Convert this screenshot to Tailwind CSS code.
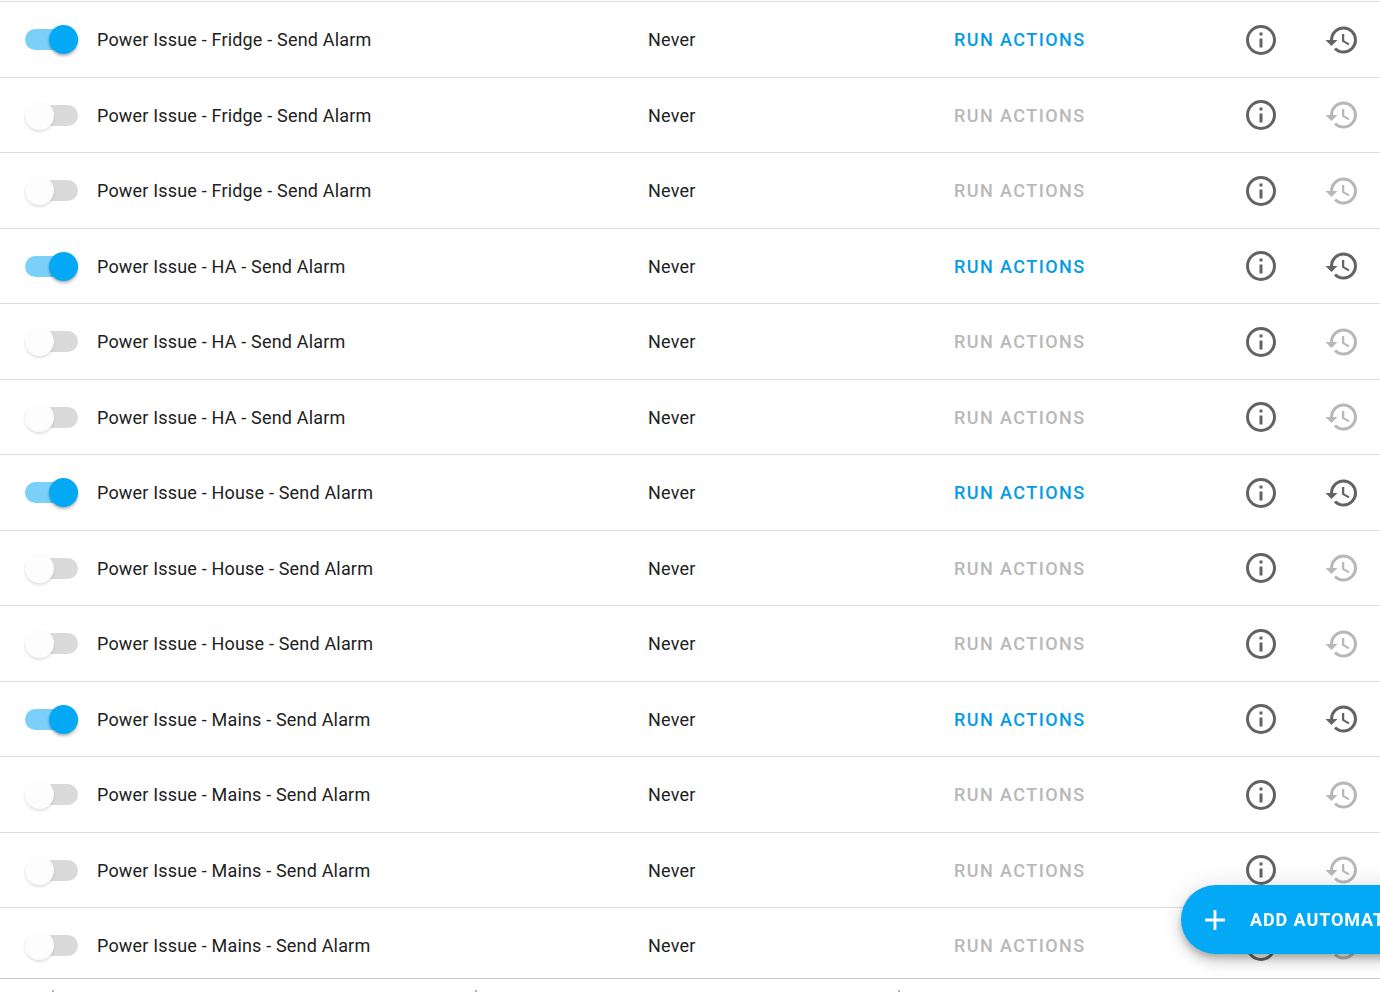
<!DOCTYPE html>
<html lang="en">
<head>
  <meta charset="UTF-8">
  <meta name="viewport" content="width=device-width, initial-scale=1.0">
  <title>Automations</title>
  <script src="https://cdn.jsdelivr.net/npm/@tailwindcss/browser@4"></script>
</head>
<body class="h-screen overflow-hidden flex flex-col bg-white text-[#212121] text-[18px] font-['Roboto',sans-serif]">

  <main class="flex-1 min-h-0 overflow-hidden pt-px">
    <table class="w-full table-fixed border-collapse border-t border-[#dcdcdc] text-left tracking-[0.01em]">
      <colgroup>
        <col class="w-[97px]">
        <col>
        <col class="w-[306px]">
        <col class="w-[265px]">
        <col class="w-[84px]">
        <col class="w-[77px]">
      </colgroup>
      <tbody id="automations"></tbody>
    </table>
  </main>

  <!-- Bottom tab bar -->
  <footer class="shrink-0 h-[14px] border-t border-[#c8c8c8] bg-white flex items-end gap-[421px] pl-[52px] overflow-hidden">
    <span class="w-[2px] h-[2px] shrink-0 bg-[#b0b0b0]"></span>
    <span class="w-[2px] h-[2px] shrink-0 bg-[#b0b0b0]"></span>
    <span class="w-[2px] h-[2px] shrink-0 bg-[#b0b0b0]"></span>
  </footer>

  <button type="button" class="fixed -right-[73px] bottom-[38px] w-[272px] h-[69px] pl-[17px] flex items-center gap-[18px] rounded-full bg-[#03a9f4] text-white font-bold tracking-[0.05em] whitespace-nowrap shadow-[0_4px_7px_-1px_rgba(0,0,0,0.22),0_8px_14px_rgba(0,0,0,0.14),0_1px_24px_rgba(0,0,0,0.12)]">
    <svg class="size-[34px] shrink-0" viewBox="0 0 24 24" fill="currentColor" aria-hidden="true"><path d="M19,13H13V19H11V13H5V11H11V5H13V11H19V13Z"/></svg>
    ADD AUTOMATION
  </button>

  <script>
    const automations = [
      { name: "Power Issue - Fridge - Send Alarm", on: true },
      { name: "Power Issue - Fridge - Send Alarm", on: false },
      { name: "Power Issue - Fridge - Send Alarm", on: false },
      { name: "Power Issue - HA - Send Alarm", on: true },
      { name: "Power Issue - HA - Send Alarm", on: false },
      { name: "Power Issue - HA - Send Alarm", on: false },
      { name: "Power Issue - House - Send Alarm", on: true },
      { name: "Power Issue - House - Send Alarm", on: false },
      { name: "Power Issue - House - Send Alarm", on: false },
      { name: "Power Issue - Mains - Send Alarm", on: true },
      { name: "Power Issue - Mains - Send Alarm", on: false },
      { name: "Power Issue - Mains - Send Alarm", on: false },
      { name: "Power Issue - Mains - Send Alarm", on: false }
    ];

    const infoIcon = "M11,9H13V7H11M12,20C7.59,20 4,16.41 4,12C4,7.59 7.59,4 12,4C16.41,4 20,7.59 20,12C20,16.41 16.41,20 12,20M12,2A10,10 0 0,0 2,12A10,10 0 0,0 12,22A10,10 0 0,0 22,12A10,10 0 0,0 12,2M11,17H13V11H11V17Z";
    const historyIcon = "M13.5,8H12V13L16.28,15.54L17,14.33L13.5,12.25V8M13,3A9,9 0 0,0 4,12H1L4.96,16.03L9,12H6A7,7 0 0,1 13,5A7,7 0 0,1 20,12A7,7 0 0,1 13,19C11.07,19 9.32,18.21 8.06,16.94L6.64,18.36C8.27,20 10.5,21 13,21A9,9 0 0,0 22,12A9,9 0 0,0 13,3";

    const tbody = document.getElementById("automations");

    automations.forEach((a, i) => {
      const row = document.createElement("tr");
      row.className = "h-[75px] odd:h-[76px] first:h-[75px] border-b border-[#dcdcdc]";
      row.innerHTML = `
        <td class="p-0 pl-[25px]">
          <input type="checkbox" id="toggle-${i}" ${a.on ? "checked" : ""} aria-labelledby="name-${i}"
            class="block relative appearance-none w-[53px] h-[21px] rounded-full bg-[#dadada] checked:bg-[#7bd0f9] before:absolute before:-top-[4px] before:left-0 before:size-[29px] before:rounded-full before:bg-[#fdfdfd] before:shadow-[0_2px_3px_rgba(0,0,0,0.12)] checked:before:left-[24px] checked:before:bg-[#03a9f4] checked:before:shadow-[0_2px_3px_rgba(0,0,0,0.3)]">
        </td>
        <td class="p-0"><label id="name-${i}" for="toggle-${i}">${a.name}</label></td>
        <td class="p-0">Never</td>
        <td class="p-0">
          <button type="button" ${a.on ? "" : "disabled"} class="block font-medium tracking-[0.08em] text-[#039be5] disabled:text-[#b8b8b8]">RUN ACTIONS</button>
        </td>
        <td class="p-0">
          <button type="button" aria-label="Show info" class="block mx-auto text-[#636363]">
            <svg class="size-[36px]" viewBox="0 0 24 24" fill="currentColor"><path d="${infoIcon}"/></svg>
          </button>
        </td>
        <td class="p-0">
          <button type="button" aria-label="Show trace" ${a.on ? "" : "disabled"} class="block mx-auto text-[#636363] disabled:text-[#b8b8b8]">
            <svg class="size-[36px]" viewBox="0 0 24 24" fill="currentColor"><path d="${historyIcon}"/></svg>
          </button>
        </td>
      `;
      tbody.appendChild(row);
    });
  </script>
</body>
</html>
